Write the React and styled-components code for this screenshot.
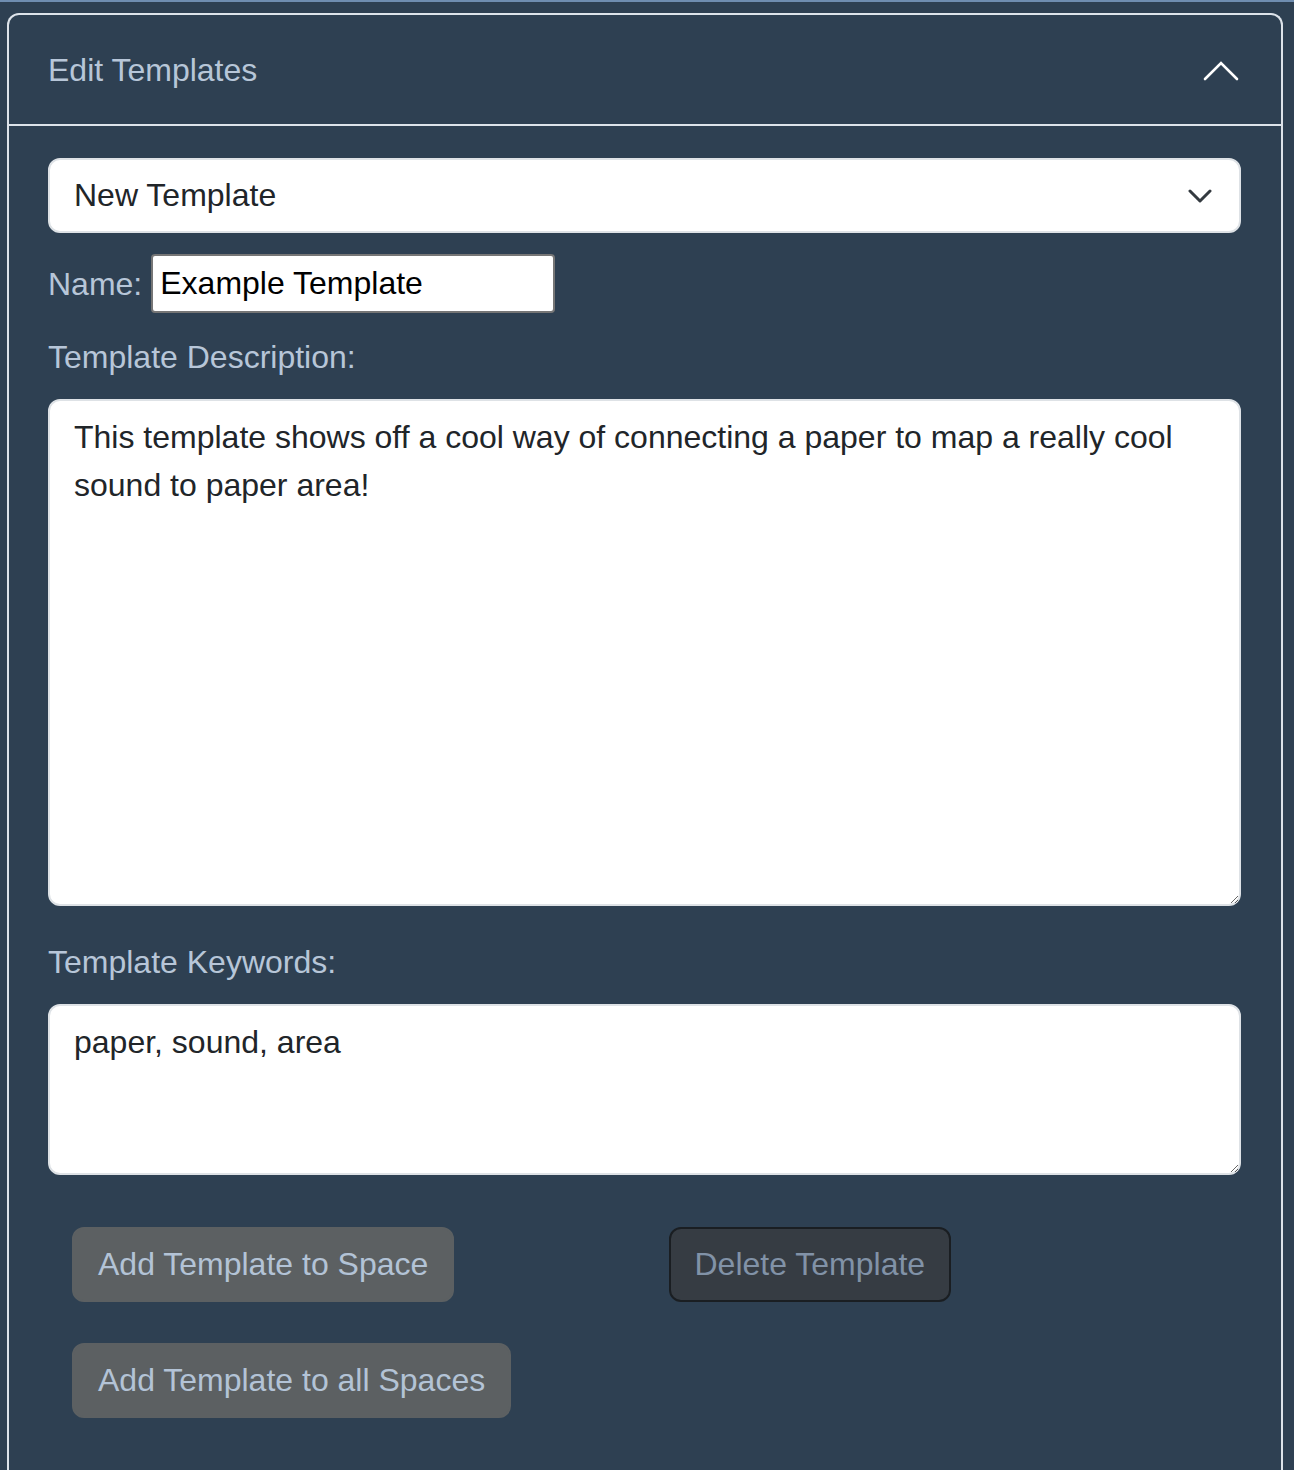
import React from 'react'
import styled, { createGlobalStyle } from 'styled-components'

const GlobalStyle = createGlobalStyle`
  html, body {
    margin: 0;
    padding: 0;
    background: #2e4052;
  }
  body {
    font-family: "Liberation Sans", Arial, sans-serif;
  }
  * {
    box-sizing: border-box;
  }
`

function ChevronUp () {
  return (
    <svg width="36" height="20" viewBox="0 0 36 20" fill="none">
      <polyline points="2,18 18,2 34,18" stroke="#ffffff" strokeWidth="2.6" strokeLinecap="round" strokeLinejoin="miter"/>
    </svg>
  )
}

function ChevronDown () {
  return (
    <svg width="24" height="14" viewBox="0 0 24 14" fill="none">
      <polyline points="2,2 12,12 22,2" stroke="#343a40" strokeWidth="3" strokeLinecap="round" strokeLinejoin="round"/>
    </svg>
  )
}

function App () {
  return (
    <>
      <GlobalStyle/>
      <Page>
        <Card>
          <CardHeader>
            <Title>Edit Templates</Title>
            <ChevronUp/>
          </CardHeader>
          <CardBody>
            <Select>
              <span>New Template</span>
              <ChevronDown/>
            </Select>

            <NameRow>
              <InlineLabel>Name:</InlineLabel>
              <TextInput type="text" defaultValue="Example Template"/>
            </NameRow>

            <BlockLabel $top={20}>Template Description:</BlockLabel>
            <TextArea $height={507} defaultValue="This template shows off a cool way of connecting a paper to map a really cool sound to paper area!"/>

            <BlockLabel $top={32}>Template Keywords:</BlockLabel>
            <TextArea $height={171} defaultValue="paper, sound, area"/>

            <ButtonGrid>
              <ButtonCell><ActionButton>Add Template to Space</ActionButton></ButtonCell>
              <ButtonCell><ActionButton $danger>Delete Template</ActionButton></ButtonCell>
              <ButtonCell><ActionButton>Add Template to all Spaces</ActionButton></ButtonCell>
            </ButtonGrid>
          </CardBody>
        </Card>
      </Page>
    </>
  )
}

export default App

const Page = styled.div`
  border-top: 2px solid #6f8db0;
  padding: 11px 11px 0 7px;
  height: 1470px;
  overflow: hidden;
`

const Card = styled.div`
  border: 2px solid #dde3ea;
  border-bottom: none;
  border-radius: 12px 12px 0 0;
  min-height: 1480px;
`

const CardHeader = styled.div`
  display: flex;
  align-items: center;
  justify-content: space-between;
  height: 111px;
  padding: 2px 42px 0 39px;
  border-bottom: 2px solid #dde3ea;
`

const Title = styled.h2`
  margin: 0;
  font-size: 32px;
  font-weight: normal;
  color: #b7c6d8;
`

const CardBody = styled.div`
  padding: 32px 40px 32px 39px;
`

const Select = styled.div`
  display: flex;
  align-items: center;
  justify-content: space-between;
  height: 75px;
  padding: 0 27px 0 24px;
  background: #ffffff;
  border: 2px solid #dee2e6;
  border-radius: 12px;
  font-size: 32px;
  color: #212529;
`

const NameRow = styled.div`
  display: flex;
  align-items: center;
  gap: 9px;
  margin-top: 21px;
`

const InlineLabel = styled.span`
  font-size: 32px;
  color: #b7c6d8;
  padding-top: 1px;
`

const TextInput = styled.input`
  width: 404px;
  height: 59px;
  padding: 0 7px;
  border: 2px solid #767676;
  border-radius: 4px;
  background: #ffffff;
  font-family: inherit;
  font-size: 32px;
  color: #000000;
  outline: none;
`

const BlockLabel = styled.div`
  margin: ${p => p.$top}px 0 18px;
  font-size: 32px;
  line-height: 48px;
  color: #b7c6d8;
`

const TextArea = styled.textarea`
  display: block;
  width: 100%;
  height: ${p => p.$height}px;
  padding: 12px 24px;
  border: 2px solid #dee2e6;
  border-radius: 12px;
  background: #ffffff;
  font-family: inherit;
  font-size: 32px;
  line-height: 48px;
  color: #212529;
  resize: vertical;
  outline: none;
`

const ButtonGrid = styled.div`
  display: grid;
  grid-template-columns: 1fr 1fr;
  row-gap: 41px;
  margin-top: 52px;
`

const ButtonCell = styled.div`
  padding-left: 24px;
`

const ActionButton = styled.button`
  height: 75px;
  padding: 0 24px;
  border: 2px solid ${p => (p.$danger ? '#1a1e22' : '#5c6062')};
  border-radius: 12px;
  background: ${p => (p.$danger ? '#363c43' : '#5c6062')};
  font-family: inherit;
  font-size: 32px;
  color: ${p => (p.$danger ? '#8192a7' : '#b3c3d6')};
  cursor: default;
`
